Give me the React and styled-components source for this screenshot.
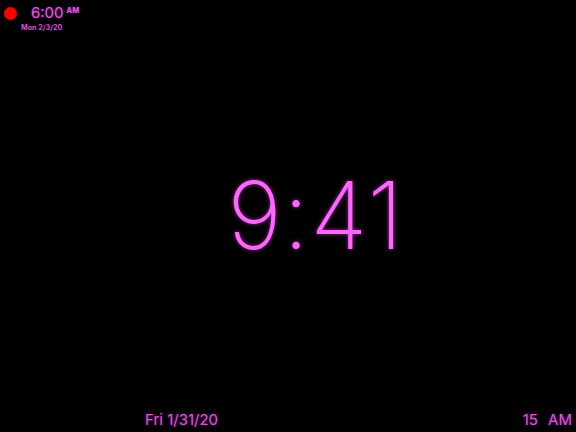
import React from 'react';
import styled, { createGlobalStyle } from 'styled-components';

const Global = createGlobalStyle`
  html, body {
    margin: 0;
    padding: 0;
    background: #000;
  }
  #root {
    height: 432px;
  }
`;

const Screen = styled.div`
  width: 576px;
  height: 432px;
  background: #000;
  display: flex;
  flex-direction: column;
  font-family: Inter, "Liberation Sans", sans-serif;
  color: #f060f0;
  overflow: hidden;
`;

const Header = styled.div`
  display: flex;
  align-items: flex-start;
  gap: 4px;
  padding: 5px 0 0 4px;
  height: 36px;
  box-sizing: border-box;
`;

const AlarmDot = styled.span`
  width: 13px;
  height: 13px;
  border-radius: 50%;
  background: #ff0000;
  margin-top: 2px;
  flex: none;
`;

const NextAlarm = styled.div`
  display: flex;
  flex-direction: column;
  align-items: flex-start;
`;

const AlarmTime = styled.div`
  display: flex;
  align-items: flex-start;
  gap: 3px;
  margin-left: 10px;
  font-size: 15px;
  line-height: 16px;
  color: #e858e8;
  text-shadow: 0 0 3px rgba(240, 80, 240, 0.5);
`;

const Meridiem = styled.span`
  font-size: ${p => p.size || 7.5}px;
  line-height: 11px;
  font-weight: 700;
`;

const AlarmDate = styled.div`
  font-size: 7.2px;
  font-weight: 700;
  margin-top: 2px;
  color: #d850d8;
`;

const Main = styled.div`
  flex: 1;
  display: flex;
  align-items: center;
  justify-content: center;
  padding-left: 56px;
  padding-bottom: 12px;
`;

const BigClock = styled.div`
  font-size: 93px;
  font-weight: 200;
  letter-spacing: 1.5px;
  line-height: 1;
  color: #ff66ff;
  text-shadow: 0 0 4px rgba(255, 80, 255, 0.6);
`;

const Footer = styled.div`
  display: flex;
  align-items: center;
  height: 26px;
  padding: 0 4px 0 145px;
  font-size: 15px;
  color: #e050e0;
  text-shadow: 0 0 3px rgba(230, 70, 230, 0.5);
`;

const Ticker = styled.span`
  margin-left: auto;
  word-spacing: 6px;
`;

export default function App() {
  return (
    <Screen>
      <Global />
      <Header>
        <AlarmDot />
        <NextAlarm>
          <AlarmTime>
            6:00<Meridiem>AM</Meridiem>
          </AlarmTime>
          <AlarmDate>Mon 2/3/20</AlarmDate>
        </NextAlarm>
      </Header>
      <Main>
        <BigClock>9:41</BigClock>
      </Main>
      <Footer>
        <span>Fri 1/31/20</span>
        <Ticker>15 AM</Ticker>
      </Footer>
    </Screen>
  );
}
